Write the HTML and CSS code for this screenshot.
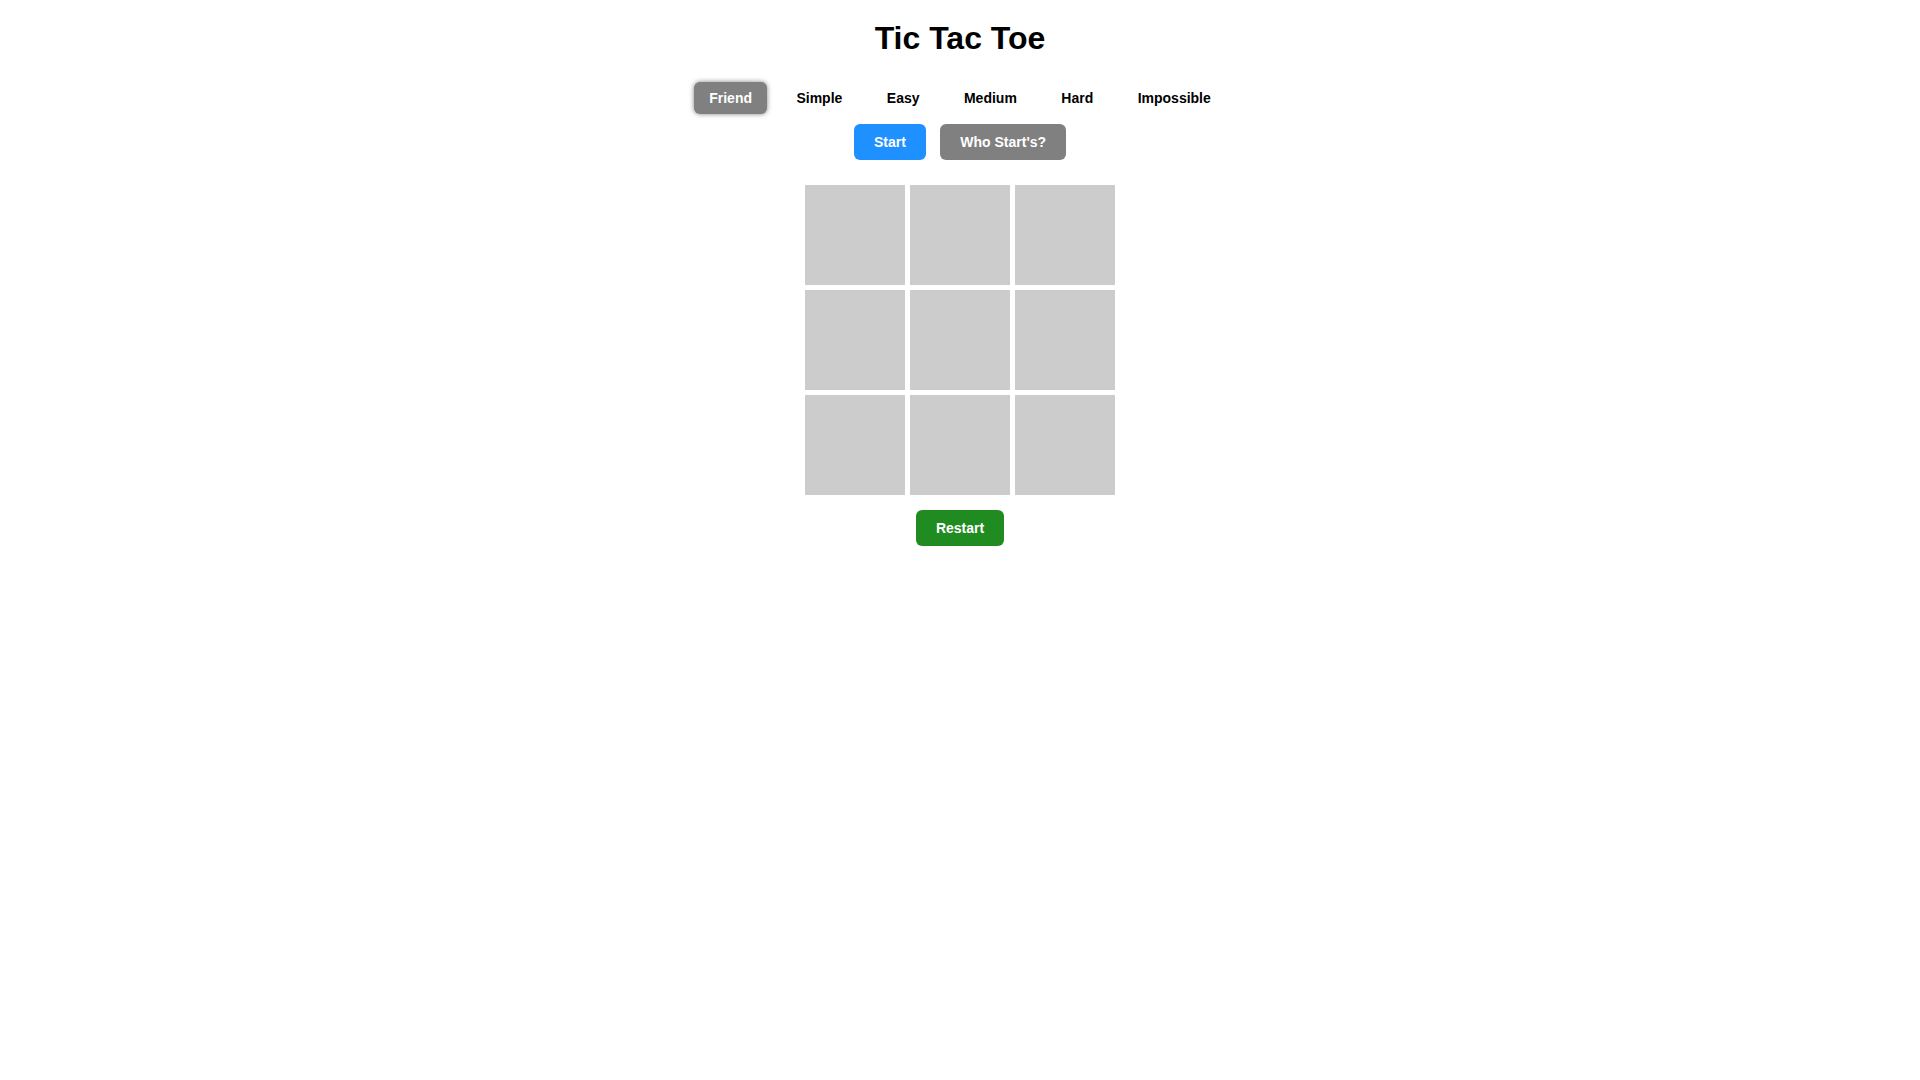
FILE: index.html
```html
<!DOCTYPE html>
<html lang="en">
<head>
<meta charset="utf-8">
<title>Tic Tac Toe</title>
<link rel="stylesheet" href="styles.css">
</head>
<body>
<main class="game">
  <h1 class="title">Tic Tac Toe</h1>
  <div class="modes">
    <button type="button" class="mode mode-active">Friend</button>
    <button type="button" class="mode">Simple</button>
    <button type="button" class="mode">Easy</button>
    <button type="button" class="mode">Medium</button>
    <button type="button" class="mode">Hard</button>
    <button type="button" class="mode">Impossible</button>
  </div>
  <div class="actions">
    <button type="button" class="action start">Start</button>
    <button type="button" class="action who">Who Start's?</button>
  </div>
  <div class="board">
    <div class="cell"></div><div class="cell"></div><div class="cell"></div>
    <div class="cell"></div><div class="cell"></div><div class="cell"></div>
    <div class="cell"></div><div class="cell"></div><div class="cell"></div>
  </div>
  <button type="button" class="action restart">Restart</button>
</main>
</body>
</html>
```
FILE: styles.css
```css
body {
  margin: 0;
  background: #fff;
  color: #000;
  font-family: "Liberation Sans", Arial, sans-serif;
}
.game {
  display: flex;
  flex-direction: column;
  align-items: center;
}
.title {
  margin: 20px 0 25px;
  font-size: 32px;
  line-height: 37px;
}
.mode,
.action {
  margin: 0 5px;
  border: 0;
  border-radius: 6px;
  font: bold 14px/16px "Liberation Sans", Arial, sans-serif;
  cursor: pointer;
}
.mode {
  padding: 8px 15px;
  background: transparent;
  color: #000;
}
.mode-active {
  background: gray;
  color: #fff;
  box-shadow: 0 0 5px rgba(0, 0, 0, 0.5);
}
.actions {
  margin: 10px 0 25px;
}
.action {
  padding: 10px 20px;
  color: #fff;
}
.start {
  background: #1e90ff;
}
.who {
  background: gray;
}
.board {
  display: grid;
  grid-template-columns: repeat(3, 100px);
  grid-auto-rows: 100px;
  gap: 5px;
}
.cell {
  background: #ccc;
}
.restart {
  margin-top: 15px;
  background: #208b20;
}
```
